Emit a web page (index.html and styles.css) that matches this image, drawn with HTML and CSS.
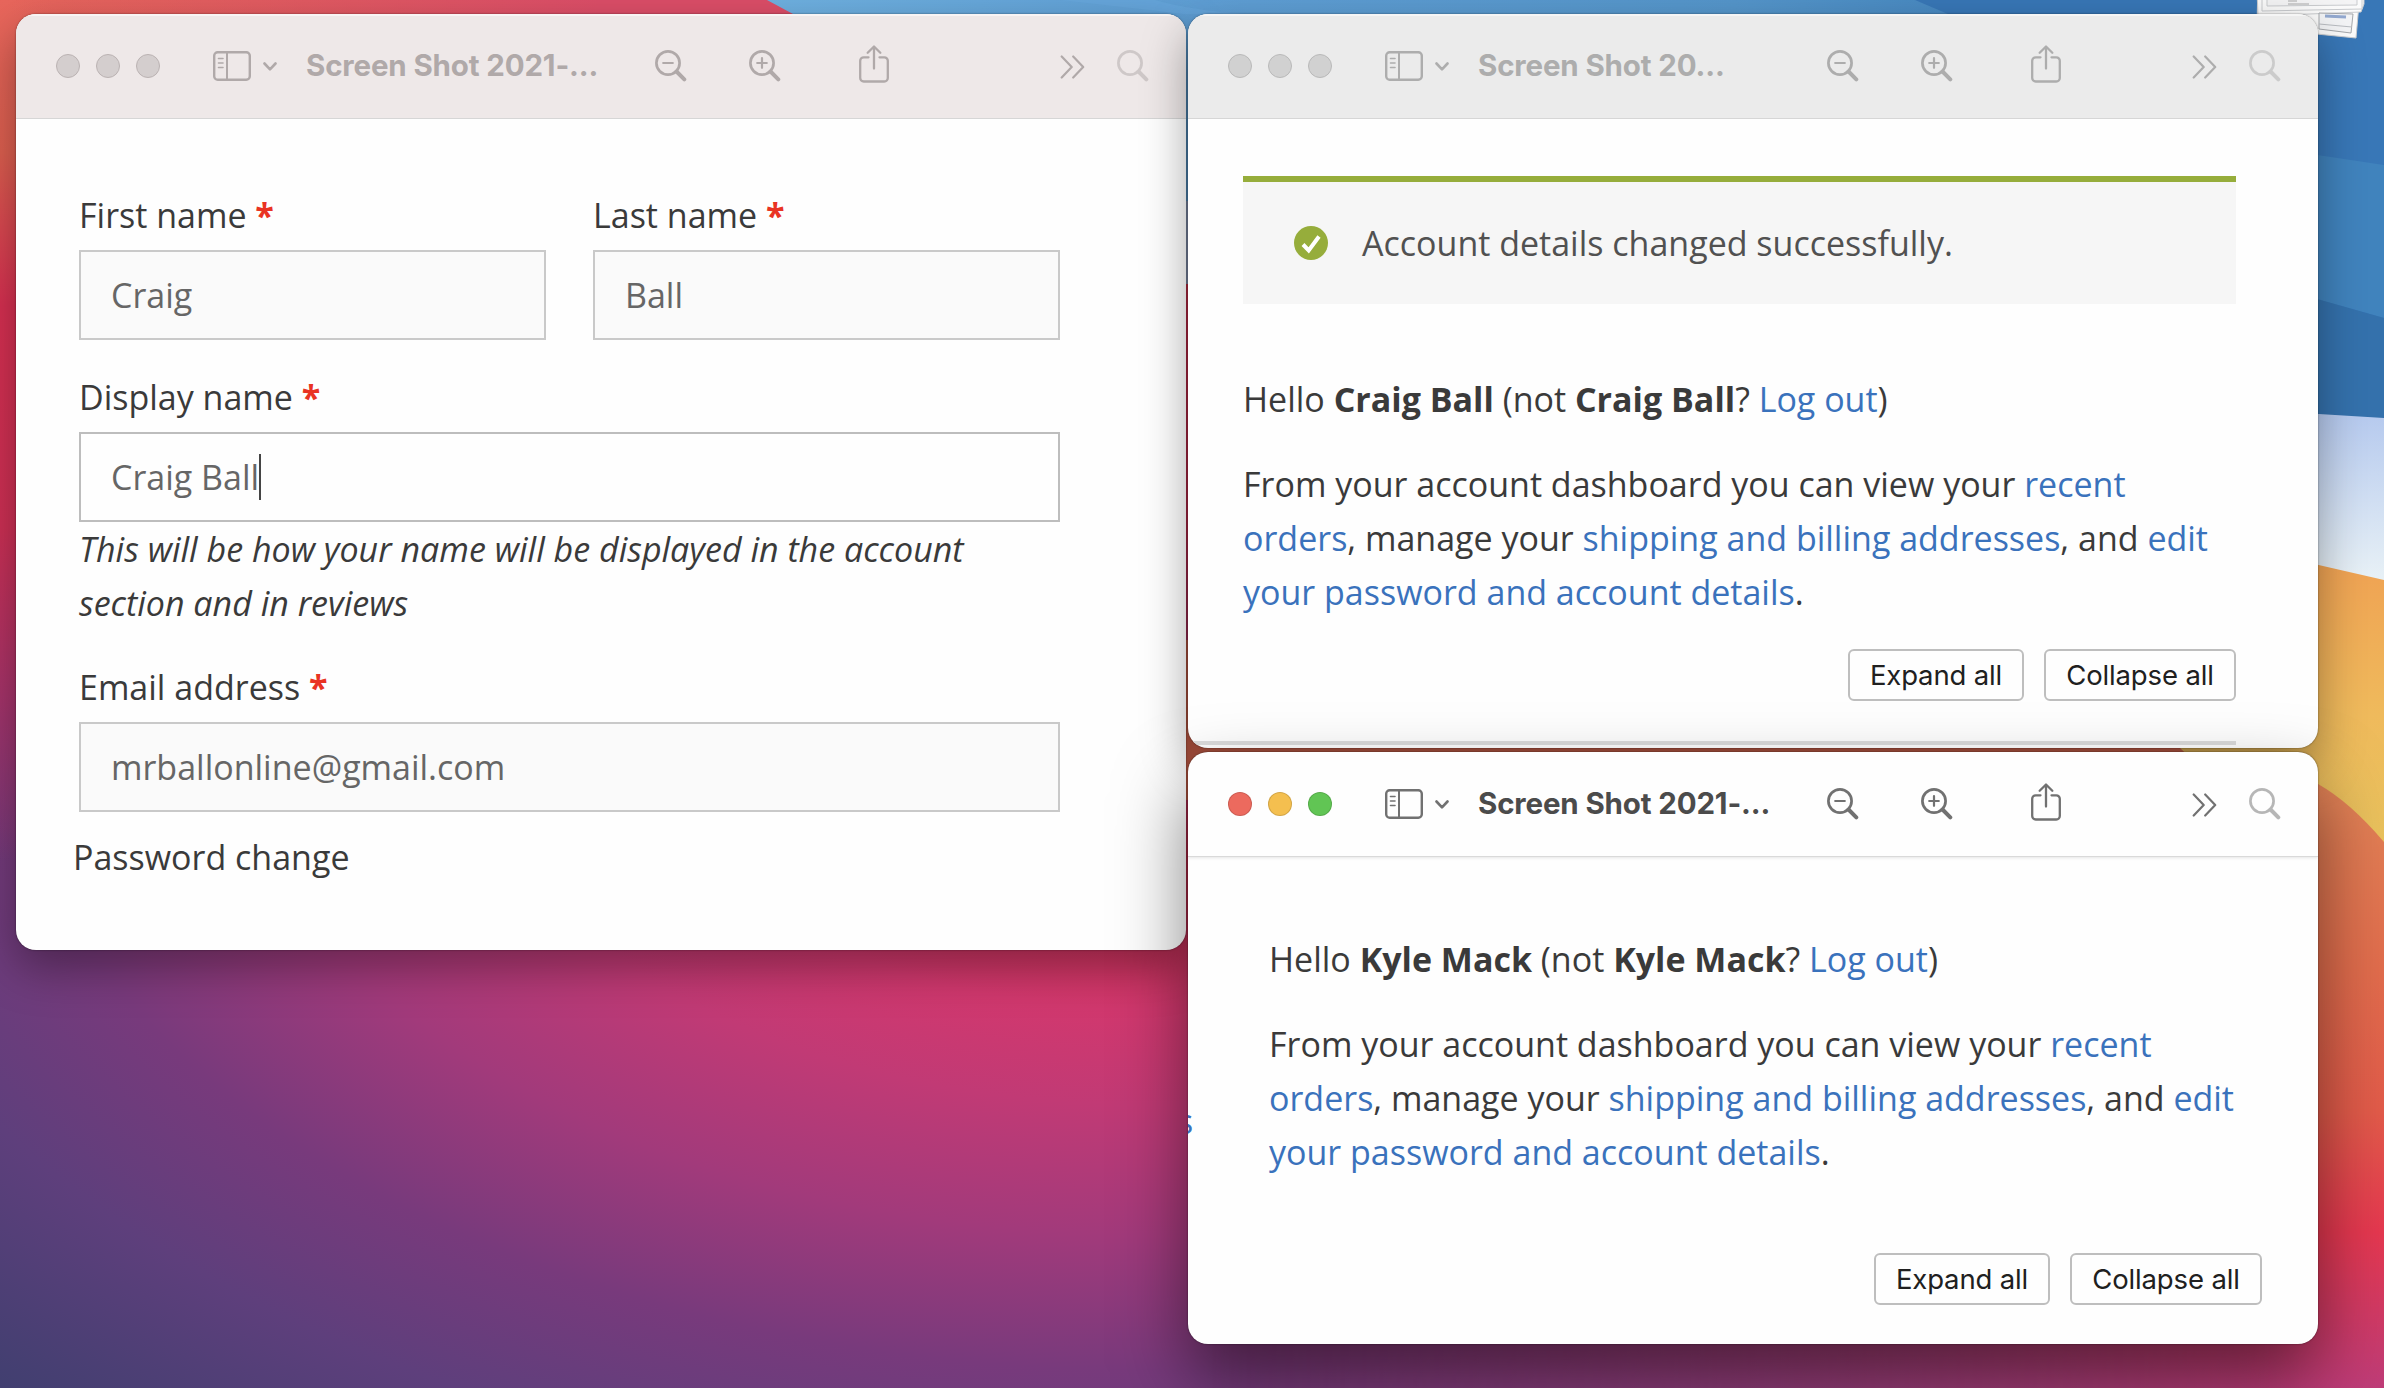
FILE: index.html
```html
<!DOCTYPE html>
<html lang="en">
<head>
<meta charset="utf-8">
<title>Desktop</title>
<link rel="stylesheet" href="styles.css">
</head>
<body>
<svg class="defs" aria-hidden="true">
  <symbol id="sidebar" viewBox="0 0 38 30">
    <g fill="none" stroke="currentColor" stroke-linecap="round">
      <rect x="1.2" y="1.2" width="35.6" height="27.6" rx="3.5" stroke-width="2.4"/>
      <path d="M14 1.5V28.5" stroke-width="2"/>
      <path d="M5.5 7.5H10M5.5 12H10M5.5 16.500H10" stroke-width="1.6"/>
    </g>
  </symbol>
  <symbol id="chevron" viewBox="0 0 14 9">
    <path d="M1.500 1.500L7 7.300L12.500 1.500" fill="none" stroke="currentColor" stroke-width="2.600" stroke-linecap="round" stroke-linejoin="round"/>
  </symbol>
  <symbol id="zoom-out" viewBox="0 0 32 32">
    <g fill="none" stroke="currentColor" stroke-linecap="round">
      <circle cx="13" cy="13" r="11.600" stroke-width="2.700"/>
      <path d="M21.500 21.500L29.300 29.300" stroke-width="4"/>
      <path d="M8.200 13H17.800" stroke-width="2.200"/>
    </g>
  </symbol>
  <symbol id="zoom-in" viewBox="0 0 32 32">
    <g fill="none" stroke="currentColor" stroke-linecap="round">
      <circle cx="13" cy="13" r="11.600" stroke-width="2.700"/>
      <path d="M21.500 21.500L29.300 29.300" stroke-width="4"/>
      <path d="M8.200 13H17.800M13 8.200V17.800" stroke-width="2.200"/>
    </g>
  </symbol>
  <symbol id="search" viewBox="0 0 32 32">
    <g fill="none" stroke="currentColor" stroke-linecap="round">
      <circle cx="13" cy="13" r="11.600" stroke-width="2.700"/>
      <path d="M21.500 21.500L29.300 29.300" stroke-width="4"/>
    </g>
  </symbol>
  <symbol id="share" viewBox="0 0 30 38">
    <g fill="none" stroke="currentColor" stroke-width="2.300" stroke-linecap="round" stroke-linejoin="round">
      <path d="M9.500 12.300H4.700a3.500 3.500 0 0 0-3.500 3.500V33a3.500 3.500 0 0 0 3.500 3.500H25.300a3.500 3.500 0 0 0 3.500-3.500V15.800a3.500 3.500 0 0 0-3.500-3.500H20.500"/>
      <path d="M15 23.500V1.800M8.700 7.700L15 1.500L21.300 7.700"/>
    </g>
  </symbol>
  <symbol id="more" viewBox="0 0 24 24">
    <path d="M1.200 1.500L11.200 12L1.200 22.500M12.700 1.500L22.700 12L12.700 22.500" fill="none" stroke="currentColor" stroke-width="2.200" stroke-linecap="round" stroke-linejoin="round"/>
  </symbol>
</svg>

<main class="desktop">
  <svg class="facets" viewBox="0 0 2384 1388" aria-hidden="true">
    <defs>
      <linearGradient id="sky" x1="760" x2="2384" y1="0" y2="0" gradientUnits="userSpaceOnUse">
        <stop offset="0" stop-color="#6fb1e1"/><stop offset=".27" stop-color="#5f9fd5"/><stop offset=".6" stop-color="#5596cb"/><stop offset=".8" stop-color="#4283bd"/><stop offset="1" stop-color="#3877b7"/>
      </linearGradient>
      <linearGradient id="cloud" x1="0" x2="0" y1="412" y2="580" gradientUnits="userSpaceOnUse">
        <stop offset="0" stop-color="#b5c9ee"/><stop offset="1" stop-color="#e8f1f6"/>
      </linearGradient>
      <linearGradient id="sand" x1="0" x2="0" y1="563" y2="840" gradientUnits="userSpaceOnUse">
        <stop offset="0" stop-color="#efa253"/><stop offset=".55" stop-color="#efba5c"/><stop offset="1" stop-color="#eac35d"/>
      </linearGradient>
      <linearGradient id="ember" x1="0" x2="0" y1="790" y2="1388" gradientUnits="userSpaceOnUse">
        <stop offset="0" stop-color="#e28256"/><stop offset=".3" stop-color="#e26d4d"/><stop offset=".54" stop-color="#e35b4a"/><stop offset=".74" stop-color="#e63850"/><stop offset="1" stop-color="#bf3c78"/>
      </linearGradient>
      <linearGradient id="fade" x1="1210" x2="2300" y1="0" y2="0" gradientUnits="userSpaceOnUse">
        <stop offset="0" stop-color="#fff" stop-opacity="0"/><stop offset="1" stop-color="#fff"/>
      </linearGradient>
      <mask id="right"><rect x="1100" width="1284" height="1388" fill="url(#fade)"/></mask>
    </defs>
    <path d="M1180 640H2200V800H1180Z" fill="#d2644d"/>
    <path d="M767 0H2384V420L2200 412L1300 203H1184L793 14Z" fill="url(#sky)"/>
    <path d="M1155 0Q1190 10 1245 14H1184L1060 0Z" fill="#69aae0" opacity=".5"/>
    <path d="M1915 0L1948 14L2250 150L2384 165V0Z" fill="#3877b7"/>
    <path d="M2250 145L2384 165V318L2250 280Z" fill="#4083bd"/>
    <path d="M2250 280L2384 318V420H2250Z" fill="#3471ac"/>
    <path d="M1184 201H1190V284H1184Z" fill="#93a3c4"/>
    <path d="M2190 406L2384 418V600H2190Z" fill="url(#cloud)"/>
    <path d="M2180 533L2384 580V880H2320L2180 748Z" fill="url(#sand)"/>
    <path d="M1200 760H2200Q2290 762 2318 784Q2350 802 2384 842V1388H1200Z" fill="url(#ember)" mask="url(#right)"/>
    <g fill="#fbfbfb" stroke="#c9cbce" stroke-width="1">
      <path d="M2258 -20L2360 -8L2356 38L2257 28Z"/>
      <path d="M2257 -10H2364V4L2361 12L2258 16Z"/>
      <path d="M2262 -10H2362V9L2262 11Z"/>
      <path d="M2267 -10H2357V5L2267 6Z" fill="#f4f4f5"/>
      <path d="M2319 13L2353 14L2351 33L2319 29Z" fill="#f3f4f6" stroke="#a4a7ab"/>
      <path d="M2319 24L2352 27" fill="none" stroke="#b9bcc1"/>
      <path d="M2325 16L2346 17" fill="none" stroke="#93a9d0" stroke-width="3"/>
      <path d="M2288 1H2297M2288 4H2309" stroke="#aaa"/>
    </g>
  </svg>

  <section class="window window-form inactive warm">
    <header class="toolbar">
      <div class="lights"><i></i><i></i><i></i></div>
      <svg class="i-sidebar"><use href="#sidebar"/></svg>
      <svg class="i-chevron"><use href="#chevron"/></svg>
      <h1 class="title">Screen Shot 2021-...</h1>
      <svg class="i-lens"><use href="#zoom-out"/></svg>
      <svg class="i-lens second"><use href="#zoom-in"/></svg>
      <svg class="i-share"><use href="#share"/></svg>
      <svg class="i-more"><use href="#more"/></svg>
      <svg class="i-search"><use href="#search"/></svg>
    </header>
    <form class="account">
      <div class="pair">
        <label class="field">First name <b>*</b><span class="input">Craig</span></label>
        <label class="field">Last name <b>*</b><span class="input">Ball</span></label>
      </div>
      <label class="field display">Display name <b>*</b><span class="input focused">Craig Ball<i class="caret"></i></span>
        <em>This will be how your name will be displayed in the account section and in reviews</em></label>
      <label class="field email">Email address <b>*</b><span class="input">mrballonline@gmail.com</span></label>
      <p class="legend">Password change</p>
    </form>
  </section>

  <section class="window window-craig inactive">
    <header class="toolbar">
      <div class="lights"><i></i><i></i><i></i></div>
      <svg class="i-sidebar"><use href="#sidebar"/></svg>
      <svg class="i-chevron"><use href="#chevron"/></svg>
      <h1 class="title">Screen Shot 20...</h1>
      <svg class="i-lens"><use href="#zoom-out"/></svg>
      <svg class="i-lens second"><use href="#zoom-in"/></svg>
      <svg class="i-share"><use href="#share"/></svg>
      <svg class="i-more"><use href="#more"/></svg>
      <svg class="i-search"><use href="#search"/></svg>
    </header>
    <div class="dashboard">
      <div class="notice">
        <svg class="check" viewBox="0 0 34 34"><circle cx="17" cy="17" r="17" fill="#96ad3b"/><path d="M9 18.500L14.700 24.500L25 10.500" fill="none" stroke="#fff" stroke-width="4"/></svg>
        <span>Account details changed successfully.</span>
      </div>
      <p class="hello">Hello <strong>Craig Ball</strong> (not <strong>Craig Ball</strong>? <a>Log out</a>)</p>
      <p class="intro">From your account dashboard you can view your <a>recent<br>orders</a>, manage your <a>shipping and billing addresses</a>, and <a>edit<br>your password and account details</a>.</p>
      <div class="actions"><button class="expand">Expand all</button><button class="collapse">Collapse all</button></div>
      <div class="rule"></div>
    </div>
  </section>

  <section class="window window-kyle">
    <header class="toolbar">
      <div class="lights"><i></i><i></i><i></i></div>
      <svg class="i-sidebar"><use href="#sidebar"/></svg>
      <svg class="i-chevron"><use href="#chevron"/></svg>
      <h1 class="title">Screen Shot 2021-...</h1>
      <svg class="i-lens"><use href="#zoom-out"/></svg>
      <svg class="i-lens second"><use href="#zoom-in"/></svg>
      <svg class="i-share"><use href="#share"/></svg>
      <svg class="i-more"><use href="#more"/></svg>
      <svg class="i-search"><use href="#search"/></svg>
    </header>
    <div class="dashboard">
      <p class="hello">Hello <strong>Kyle Mack</strong> (not <strong>Kyle Mack</strong>? <a>Log out</a>)</p>
      <p class="intro">From your account dashboard you can view your <a>recent<br>orders</a>, manage your <a>shipping and billing addresses</a>, and <a>edit<br>your password and account details</a>.</p>
      <div class="actions"><button class="expand">Expand all</button><button class="collapse">Collapse all</button></div>
    </div>
    <a class="clipped">s</a>
  </section>
</main>
</body>
</html>
```
FILE: styles.css
```css
* { box-sizing: border-box; }
body { margin: 0; overflow: hidden; }
p, h1 { margin: 0; }
.defs { display: none; }

.desktop {
  position: relative;
  width: 2384px;
  height: 1388px;
  overflow: hidden;
  font-family: "Open Sans", "Noto Sans", sans-serif;
  font-size: 34px;
  line-height: 54px;
  color: #3a3a3a;
  background:
    linear-gradient(90deg, #dc4e6800 8px, #dc4e68 600px) 0 0 / 1100px 15px no-repeat,
    linear-gradient(180deg, #e8665c 0, #df6050 11%, #d93052 22%, #cf3055 38%, #a8346b 50%, #7f387800 62%),
    radial-gradient(ellipse 1150px 680px at 1150px 690px, #d92f4c 0, #d8335a 32%, #d1386e 47%, #c13a75 61%, #a23a7b 80%, #783a7c 100%, #5e3f7c 119%, #413f70 143%);
}
.facets { position: absolute; left: 0; top: 0; width: 2384px; height: 1388px; }

.window {
  position: absolute;
  display: flex;
  flex-direction: column;
  background: #fefefe;
  border-radius: 20px;
  overflow: hidden;
  box-shadow: 0 0 2px rgba(0, 0, 0, .55), 0 34px 70px rgba(0, 0, 0, .5);
}
.inactive { box-shadow: 0 0 2px rgba(0, 0, 0, .5), 0 18px 46px rgba(0, 0, 0, .36); }
.window-form { left: 16px; top: 14px; width: 1170px; height: 936px; }
.window-craig { left: 1188px; top: 14px; width: 1130px; height: 734px; }
.window-kyle { left: 1188px; top: 752px; width: 1130px; height: 592px; }

.toolbar {
  display: flex;
  align-items: center;
  flex: none;
  height: 105px;
  padding: 0 37px 1px 40px;
  border-bottom: 1px solid #d9d9d9;
  box-shadow: 0 1px 3px rgba(0, 0, 0, .1);
  color: #717171;
}
.inactive .toolbar { background: #ebebeb; color: #adadad; border-color: #d6d6d6; box-shadow: inset 0 2px 0 #f5f5f5; }
.warm .toolbar { background: #eee8e8; color: #b0a9a9; box-shadow: inset 0 2px 0 #f8f4f4; }
.toolbar svg { flex: none; }
.lights { display: flex; gap: 16px; }
.lights i { width: 24px; height: 24px; border-radius: 50%; border: 1px solid #0002; }
.lights i:nth-child(1) { background: #ec6a5e; }
.lights i:nth-child(2) { background: #f4bf4f; }
.lights i:nth-child(3) { background: #61c554; }
.inactive .lights i { background: #d1d1d1; border-color: #b9b9b9; }
.warm .lights i { background: #d4cece; border-color: #bbb3b3; }
.i-sidebar { width: 38px; height: 30px; margin: 0 12px 0 53px; }
.i-chevron { width: 14px; height: 9px; margin: 2px 29px 0 0; }
.title {
  width: 349px;
  padding-bottom: 2px;
  font: 700 29.5px/40px Inter, sans-serif;
  letter-spacing: -.15px;
  white-space: nowrap;
  color: #4b4b4b;
}
.inactive .title { color: #adadad; }
.warm .title { color: #b0a9a9; }
.i-lens { width: 32px; height: 32px; }
.i-lens.second { margin-left: 62px; }
.i-share { width: 30px; height: 38px; margin: 0 0 4px 78px; }
.i-more { width: 25px; height: 24px; margin: 2px 32px 0 auto; }
.i-search { width: 32px; height: 32px; opacity: .5; }

.account { display: flex; flex-direction: column; padding: 69px 126px 0 63px; }
.pair { display: grid; grid-template-columns: 467px 467px; gap: 47px; }
.field { display: block; }
.field b { color: #e93323; }
.input {
  display: flex;
  align-items: center;
  height: 90px;
  margin-top: 8px;
  padding: 0 30px;
  border: 2px solid #c9c9c9;
  background: #fafafa;
  color: #666;
}
.input.focused { background: #fefefe; border-color: #bdbdbd; }
.caret { width: 2px; height: 46px; background: #444; }
.display { margin-top: 30px; }
.display em { display: block; margin-right: 40px; }
.email { margin-top: 30px; }
.legend { margin: 18px 0 0 -6px; }

.dashboard { display: flex; flex-direction: column; flex: 1; padding: 57px 82px 0 55px; }
.notice {
  display: flex;
  align-items: center;
  gap: 34px;
  height: 128px;
  padding: 0 51px;
  margin-bottom: 68px;
  border-top: 6px solid #96ad3b;
  background: #f6f6f6;
  color: #515151;
}
.check { width: 34px; height: 34px; }
a { color: #3a72bc; }
.intro { margin-top: 31px; white-space: nowrap; }
.actions { display: flex; justify-content: flex-end; gap: 20px; margin-top: 30px; }
.actions button {
  height: 52px;
  padding: 1px 0 0;
  border: 2px solid #bebebe;
  border-radius: 6px;
  background: #fefefe;
  color: #202020;
  font: 400 27.5px/1 Inter, sans-serif;
  letter-spacing: -.15px;
}
.expand { width: 176px; }
.collapse { width: 192px; }
.rule { height: 4px; margin: 40px 0 0 -55px; background: #dcdcdc; }
.window-craig .actions button { background: transparent; }
.window-kyle .dashboard { padding: 75px 56px 0 81px; }
.window-kyle .actions { margin-top: 74px; }
.clipped { position: absolute; left: -11px; top: 342px; }
```
